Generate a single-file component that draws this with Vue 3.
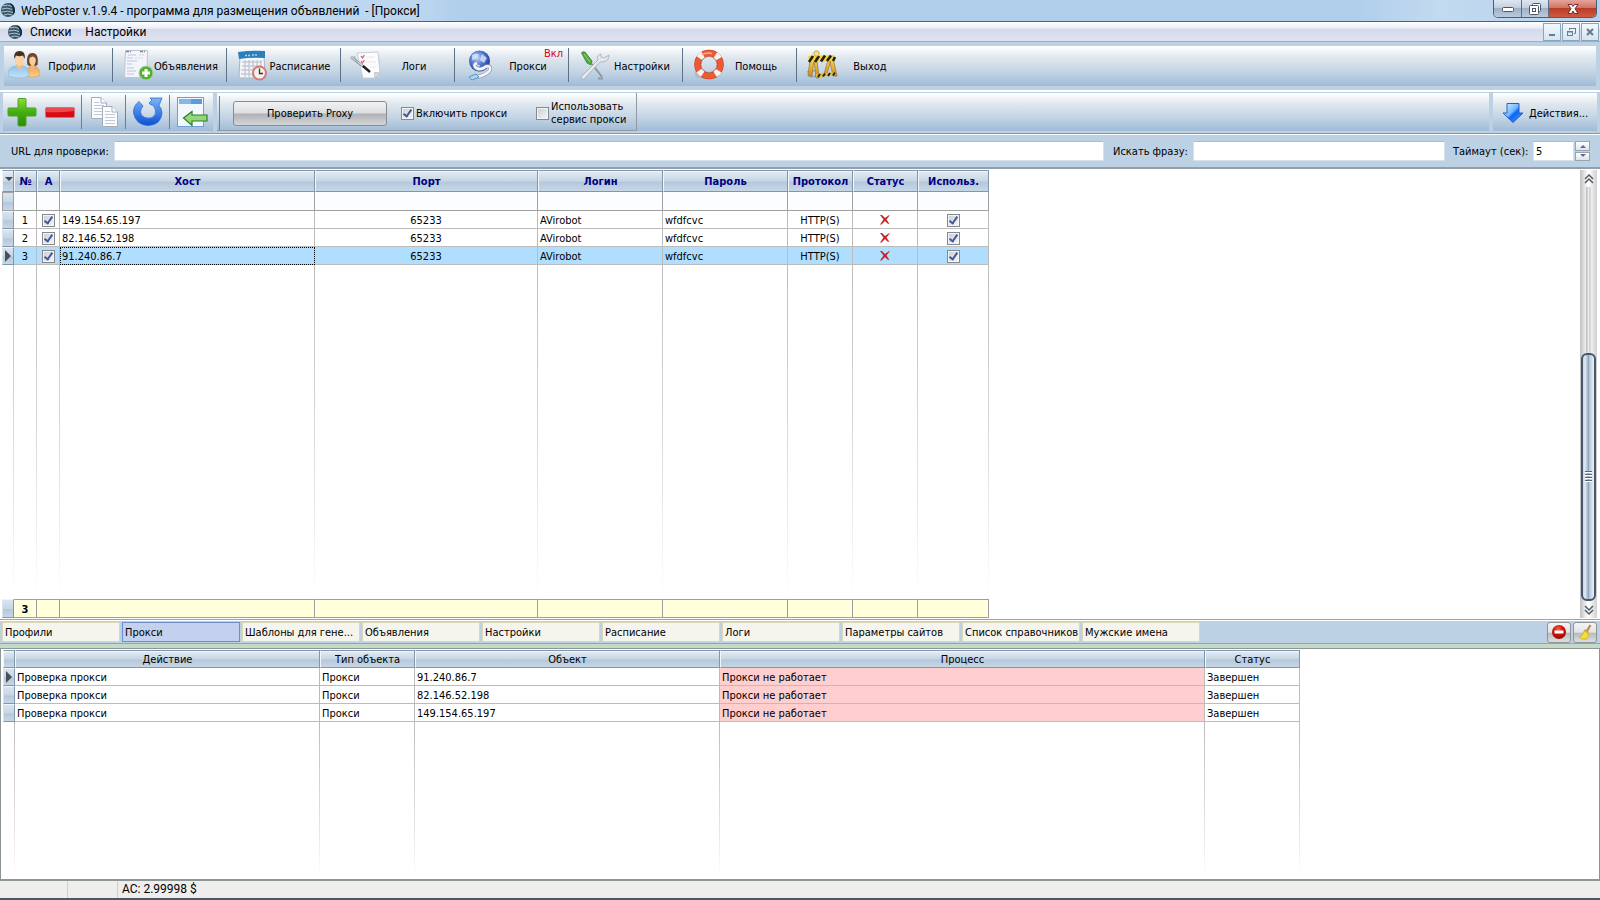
<script setup>
import { ref } from 'vue'

const tools = [
  { id: 'users', label: 'Профили' },
  { id: 'ads', label: 'Объявления' },
  { id: 'calendar', label: 'Расписание' },
  { id: 'logs', label: 'Логи' },
  { id: 'proxy', label: 'Прокси', badge: 'Вкл' },
  { id: 'settings', label: 'Настройки' },
  { id: 'help', label: 'Помощь' },
  { id: 'exit', label: 'Выход' }
]
const proxies = ref([
  { host: '149.154.65.197', port: '65233', login: 'AVirobot', pass: 'wfdfcvc', proto: 'HTTP(S)', a: true, use: true },
  { host: '82.146.52.198', port: '65233', login: 'AVirobot', pass: 'wfdfcvc', proto: 'HTTP(S)', a: true, use: true },
  { host: '91.240.86.7', port: '65233', login: 'AVirobot', pass: 'wfdfcvc', proto: 'HTTP(S)', a: true, use: true }
])
const heads = ['№', 'А', 'Хост', 'Порт', 'Логин', 'Пароль', 'Протокол', 'Статус', 'Использ.']
const tabs = ['Профили', 'Прокси', 'Шаблоны для гене...', 'Объявления', 'Настройки', 'Расписание', 'Логи', 'Параметры сайтов', 'Список справочников', 'Мужские имена']
const jobHeads = ['Действие', 'Тип объекта', 'Объект', 'Процесс', 'Статус']
const jobs = ['91.240.86.7', '82.146.52.198', '149.154.65.197']
const selected = ref(2)
const activeTab = ref(1)
const enabled = ref(true)
const service = ref(false)
const url = ref('')
const phrase = ref('')
const timeout = ref('5')
</script>

<template>
  <div class="window">
    <svg class="defs" width="0" height="0" aria-hidden="true">
      <defs>
        <linearGradient id="gGreen" x1="0" y1="0" x2="0" y2="1"><stop offset="0" stop-color="#8fdc3c" /><stop offset=".5" stop-color="#43ad10" /><stop offset="1" stop-color="#2c8a0b" /></linearGradient>
        <linearGradient id="gBlue" x1="0" y1="0" x2="0" y2="1"><stop offset="0" stop-color="#7db6f5" /><stop offset="1" stop-color="#0b4fd4" /></linearGradient>
        <linearGradient id="gArrow" x1="0" y1="0" x2="1" y2="1"><stop offset="0" stop-color="#e4f3ff" /><stop offset=".45" stop-color="#6db6ff" /><stop offset=".55" stop-color="#0a66f5" /><stop offset="1" stop-color="#48a8ff" /></linearGradient>
        <linearGradient id="gShirt" x1="0" y1="0" x2="0" y2="1"><stop offset="0" stop-color="#8fc4ec" /><stop offset="1" stop-color="#c4e2f6" /></linearGradient>
        <linearGradient id="gOrange" x1="0" y1="0" x2="0" y2="1"><stop offset="0" stop-color="#f0a24c" /><stop offset="1" stop-color="#fbd08a" /></linearGradient>
        <linearGradient id="gFrame" x1="0" y1="0" x2="0" y2="1"><stop offset="0" stop-color="#f8dc58" /><stop offset="1" stop-color="#c9821c" /></linearGradient>
        <radialGradient id="gGlobe" cx=".4" cy=".35" r=".7"><stop offset="0" stop-color="#c2d5f7" /><stop offset=".5" stop-color="#4f77cf" /><stop offset="1" stop-color="#152f8c" /></radialGradient>
        <radialGradient id="gStop" cx=".45" cy=".3" r=".7"><stop offset="0" stop-color="#f26a50" /><stop offset=".5" stop-color="#d51008" /><stop offset="1" stop-color="#8e0a05" /></radialGradient>
      </defs>
      <symbol id="logo" viewBox="0 0 16 16">
        <circle cx="8" cy="8" r="7" fill="#3d5666" />
        <path d="M3 4Q8 2 12 4.500M2 7Q7 5 12 7.500M2 10Q8 8 13 10.500M4 13Q8 11 12 13" fill="none" stroke="#a9c6d6" />
        <path d="M9 1Q15 5 13 13L14.500 11Q16 6 12 2Z" fill="#0e2231" />
      </symbol>
    </svg>

    <header class="titlebar">
      <svg class="logo" width="16" height="16"><use href="#logo" /></svg>
      <h1>WebPoster v.1.9.4 - программа для размещения объявлений&nbsp; - [Прокси]</h1>
      <div class="wbtns">
        <button class="wb wmin" aria-label="Свернуть"><svg width="14" height="8"><rect x="1.500" y="2.500" width="11" height="4" rx="1" fill="#fff" stroke="#4d5666" /></svg></button>
        <button class="wb wmax" aria-label="Восстановить"><svg width="14" height="14" fill="#fff" stroke="#4d5666"><rect x="4.500" y="1.500" width="8" height="8" rx="1" /><rect x="1.500" y="3.500" width="9" height="9" rx="1" /><rect x="4.500" y="6.500" width="3" height="3" /></svg></button>
        <button class="wb wclose" aria-label="Закрыть"><svg width="14" height="12"><path d="M2 1.500H5.500L7 3.500L8.500 1.500H12L9 5.700L12 10.500H8.500L7 8L5.500 10.500H2L5 5.700Z" fill="#fff" stroke="#6b2f33" /></svg></button>
      </div>
    </header>

    <nav class="menubar">
      <svg class="logo" width="16" height="16"><use href="#logo" /></svg>
      <button class="menu">Списки</button>
      <button class="menu">Настройки</button>
      <div class="mdi">
        <button aria-label="Свернуть окно"><svg width="12" height="12"><path d="M3 9H9" stroke="#6a7d8e" stroke-width="2" /></svg></button>
        <button aria-label="Восстановить окно"><svg width="12" height="12" fill="none" stroke="#6a7d8e"><path d="M4.500 4V2.500H10.500V7.500H9M4 2.500H11" /><rect x="2.500" y="5.500" width="5" height="4" /><path d="M2 6H8" /></svg></button>
        <button aria-label="Закрыть окно"><svg width="12" height="12"><path d="M3 3L9 9M9 3L3 9" stroke="#6a7d8e" stroke-width="2.200" /></svg></button>
      </div>
    </nav>

    <div class="bar1">
      <div class="strip1">
        <button v-for="t in tools" :key="t.id" class="tool">
          <svg v-if="t.id === 'users'" width="32" height="32" viewBox="0 0 32 32">
            <path d="M18 27.500Q18 18 24 17Q32 17 32 26Q27 29 18 27.500Z" fill="url(#gOrange)" stroke="#d9913f" stroke-width=".5" />
            <path d="M19.500 16Q17.500 4 24.500 4Q31 4 29.500 16L27 17H22Z" fill="#6b4226" />
            <path d="M23 15H26.500V19L24.500 21L22.500 19Z" fill="#eab888" />
            <ellipse cx="24.500" cy="11.500" rx="3.300" ry="5" fill="#f6cda2" />
            <path d="M20.500 9Q21 5.500 25 5.500L29 10L25 7.500Z" fill="#7a4c2b" />
            <path d="M0 27Q0 17 8 17Q12 19 15 17Q21 18 21 27Q12 31 0 27Z" fill="url(#gShirt)" stroke="#79aeda" stroke-width=".5" />
            <path d="M8 17L11.500 21L15 17V13H8Z" fill="#f1bd87" />
            <ellipse cx="11.500" cy="10.500" rx="4.700" ry="6.500" fill="#f9d3a5" />
            <path d="M6.500 10Q5 2 11.500 2Q18 2 16.500 10L15 6.500Q11 8 8 6.500Z" fill="#43301f" />
          </svg>
          <svg v-else-if="t.id === 'ads'" width="32" height="32" viewBox="0 0 32 32">
            <path d="M3.500 1.500H25.500L25 28.500H2.500Z" fill="#f4f5fa" stroke="#bfc4d2" />
            <path d="M4 2.500H25" stroke="#7d8592" stroke-width="1.500" stroke-dasharray="3 1 1 9" />
            <path d="M6 6H14M5 9H11M5 12H15M5 15H10M5 19H12M5 22H14M5 25H12" stroke="#bcc3e2" />
            <path d="M17 6H22M13 9H22" stroke="#cdd2e4" stroke-dasharray="2 1" />
            <circle cx="24" cy="24" r="7" fill="#4fb32c" stroke="#b9c9b5" /><path d="M24 20V28M20 24H28" stroke="#fff" stroke-width="3" />
          </svg>
          <svg v-else-if="t.id === 'calendar'" width="32" height="32" viewBox="0 0 32 32">
            <path d="M4 6H28L29 29H3Z" fill="#f5f6f8" stroke="#a8b4c4" />
            <path d="M6 13H26M6 17H26M5 21H26M5 25H18M9 11V28M13 11V28M17 11V28M21 11V20M25 11V18" stroke="#c3cad4" stroke-width="1.400" />
            <path d="M2 3Q15 1 29 2V9Q15 8 3 10Z" fill="#2c80b9" />
            <path d="M9 6.500H14M16 6H22" stroke="#a9d3f0" stroke-width="1.500" stroke-dasharray="2 1" />
            <circle cx="23.500" cy="24" r="6.500" fill="#f7efee" stroke="#cf7d74" stroke-width="2" /><path d="M23.500 19.500V24.500H27" fill="none" stroke="#333" stroke-width="1.300" />
          </svg>
          <svg v-else-if="t.id === 'logs'" width="32" height="32" viewBox="0 0 32 32">
            <path d="M8 6L29 5L31 27L13 30Z" fill="#c9ced7" />
            <path d="M7 4L28 3L30 24L25 29L13 29Z" fill="#fcfcfd" stroke="#c8cdd6" />
            <path d="M30 24L24.500 23.500L25 29Z" fill="#d7dbe2" stroke="#bfc4cc" />
            <path d="M11 7L12.500 9L14.500 6M11 12L12.500 14L14.500 11" fill="none" stroke="#c8697a" stroke-width="1.300" />
            <path d="M16 8H25M17 13H26M20 18H27" stroke="#e6e9ee" />
            <path d="M1 8L14 18" stroke="#7e858f" stroke-width="2.400" /><path d="M1 8L13 17" stroke="#d5dae1" stroke-width="1.200" /><path d="M8 15L4 7" stroke="#9aa1aa" /><path d="M13 17L20 23" stroke="#1c1e22" stroke-width="2.400" />
          </svg>
          <svg v-else-if="t.id === 'proxy'" width="32" height="32" viewBox="0 0 32 32">
            <circle cx="15.500" cy="12" r="10.500" fill="url(#gGlobe)" />
            <path d="M8 6Q12 3 15 6L12 10L8 11ZM18 5L23 9L20 14L16 11ZM11 15L16 16L15 19L12 18Z" fill="#e3ebfb" opacity=".75" />
            <path d="M13 14Q8 16 13 19.500Q18 21 22 17.500Q27 16 26 21Q23 26 13 28" fill="none" stroke="#8b98ad" stroke-width="4" />
            <path d="M13 14Q8 16 13 19.500Q18 21 22 17.500Q27 16 26 21Q23 26 13 28" fill="none" stroke="#f2f5f9" stroke-width="2.500" />
            <path d="M5 28L12 25L15 28L8 31Z" fill="#a8d8f3" stroke="#5b93bd" />
          </svg>
          <svg v-else-if="t.id === 'settings'" width="32" height="32" viewBox="0 0 32 32">
            <path d="M14 15L24 28" stroke="#8d959e" stroke-width="2" /><path d="M20 29.500H25" stroke="#9098a2" stroke-width="2" />
            <path d="M3 28L20 11Q18 6 23 5L23 8L26 9L31 6Q31 12 25 13L22 13L6 30Q3 31 3 28Z" fill="#e6e9ec" stroke="#a3aab2" stroke-width=".8" />
            <path d="M3.500 4Q4 2 7 3L14 12L13 16L9 14Z" fill="#4fa63c" stroke="#397d2b" stroke-width=".7" /><path d="M6 5L12 13" stroke="#98d884" />
          </svg>
          <svg v-else-if="t.id === 'help'" width="32" height="32" viewBox="0 0 32 32">
            <path d="M2 22L4 29H27Z" fill="#b3bdc9" />
            <circle cx="17" cy="15.500" r="11.500" fill="none" stroke="#b63b1c" stroke-width="6.500" />
            <circle cx="17" cy="15.500" r="11.500" fill="none" stroke="#ee5a34" stroke-width="5.500" />
            <circle cx="17" cy="15.500" r="11.500" fill="none" stroke="#f7f3f0" stroke-width="6.500" stroke-dasharray="5 13.060" stroke-dashoffset="-6.500" />
            <path d="M10 6Q14 3 20 4.500" fill="none" stroke="#ffa88a" stroke-width="1.500" />
            <circle cx="17" cy="15.500" r="8" fill="none" stroke="#a3625a" stroke-width=".6" />
          </svg>
          <svg v-else width="32" height="32" viewBox="0 0 32 32">
            <path d="M1 23L12 21M4 28L17 26" stroke="#98a4b0" stroke-width="1.500" />
            <path d="M4 10H8L6 27H2ZM23 9H27L31 27H27ZM8 11H11L13 29H10ZM22 11H25L21 25H18Z" fill="url(#gFrame)" stroke="#956315" stroke-width=".6" />
            <path d="M2 7L28 6L29 12L3 13Z" fill="#f5d53c" /><path d="M3 13L7 7M9 13L13 7M15 12.500L19 6.500M21 12L25 6.500M27 12L29 8" stroke="#202014" stroke-width="2.600" />
            <path d="M10 25L30 23V26L10 28.500Z" fill="#e5bd2c" /><path d="M12 28L14 25M17 27.500L19 24.500M22 27L24 24M27 26.500L29 23.500" stroke="#262414" stroke-width="2" />
            <circle cx="10.500" cy="4.500" r="2.700" fill="#f8dc8d" stroke="#d6a349" />
          </svg>
          <span class="tlabel">{{ t.label }}</span>
          <span v-if="t.badge" class="badge">{{ t.badge }}</span>
        </button>
      </div>
    </div>

    <div class="bar2">
      <div class="strip quick">
        <button class="ib" aria-label="Добавить"><svg width="32" height="32" viewBox="0 0 32 32"><path d="M12 3.500Q12 2.500 13 2.500H19Q20 2.500 20 3.500V12H29Q30 12 30 13V19Q30 20 29 20H20V29Q20 30 19 30H13Q12 30 12 29V20H3Q2 20 2 19V13Q2 12 3 12H12Z" fill="url(#gGreen)" stroke="#4aa321" /></svg></button>
        <button class="ib" aria-label="Удалить"><svg width="32" height="32" viewBox="0 0 32 32"><rect x="1.500" y="11.500" width="29" height="10" rx="1.500" fill="#d80a14" stroke="#c9737a" /><path d="M2 12H30V15Q16 17 2 16Z" fill="#ea4a4c" /></svg></button>
        <i class="sep"></i>
        <button class="ib" aria-label="Копировать"><svg width="32" height="32" viewBox="0 0 32 32" fill="#fbfcfe" stroke="#a4adba"><path d="M3.500 1.500H13L18.500 7V22.500H3.500Z" /><path d="M13 1.500V7H18.500" /><path d="M6 6.500H11M6 9.500H16M6 12.500H16M6 15.500H16M6 18.500H16" stroke="#c1c9d6" /><path d="M14.500 10.500H24L29.500 16V30.500H14.500Z" /><path d="M24 10.500V16H29.500" /><path d="M17 15.500H22M17 18.500H27M17 21.500H27M17 24.500H27M17 27.500H27" stroke="#c1c9d6" /></svg></button>
        <i class="sep"></i>
        <button class="ib" aria-label="Обновить"><svg width="32" height="32" viewBox="0 0 32 32"><path d="M7 5.500Q1 10 1.500 17Q4 29 16 29.500Q29 29 30 17Q30 13 27 9.500L30 2H18L20 4L17 7L19 9H21Q25 14 23 19Q20 23 15 22Q9 21 8.500 16Q8.500 13 11 10Z" fill="url(#gBlue)" stroke="#2a72dd" stroke-width=".8" /></svg></button>
        <i class="sep"></i>
        <button class="ib" aria-label="Импорт"><svg width="32" height="32" viewBox="0 0 32 32"><rect x="1.500" y="1.500" width="26" height="29" fill="#f2f8fe" stroke="#6f9fd0" /><path d="M3 3H26V8H3Z" fill="#5d9cdb" /><path d="M3 3H15V8H3Z" fill="#86b8e6" /><path d="M7.500 22L16 15.500V19H31V25H16V29.500Z" fill="#93d77a" stroke="#2d7f21" stroke-width="1.200" /></svg></button>
      </div>
      <div class="strip mid">
        <div class="panel">
          <i class="sep"></i>
          <button class="check">Проверить Proxy</button>
          <label class="cl first"><input v-model="enabled" type="checkbox" /><span>Включить прокси</span></label>
          <label class="cl"><input v-model="service" type="checkbox" /><span>Использовать<br />сервис прокси</span></label>
        </div>
      </div>
      <button class="strip actions">
        <svg width="22" height="22" viewBox="0 0 22 22"><path d="M5 1.500H17V11H21L11 20.500L1 11H5Z" fill="url(#gArrow)" stroke="#2a5cc4" /></svg>
        <span>Действия...</span>
      </button>
    </div>

    <form class="urlbar" @submit.prevent>
      <label for="url">URL для проверки:</label>
      <input id="url" v-model="url" class="iurl" type="text" />
      <label for="phrase">Искать фразу:</label>
      <input id="phrase" v-model="phrase" class="iphrase" type="text" />
      <label for="timeout">Таймаут (сек):</label>
      <input id="timeout" v-model="timeout" class="itime" type="text" />
      <div class="spin">
        <button type="button" aria-label="Больше" @click="timeout = String(+timeout + 1)"><svg width="8" height="4"><path d="M1 4L4 1L7 4Z" fill="#5a6c9c" /></svg></button>
        <button type="button" aria-label="Меньше" @click="timeout = String(+timeout - 1)"><svg width="8" height="4"><path d="M1 0L4 3L7 0Z" fill="#5a6c9c" /></svg></button>
      </div>
    </form>

    <main class="grid">
      <div class="gridbody">
        <table class="t1">
          <colgroup><col class="ind" /><col class="c23" /><col class="c23" /><col class="chost" /><col class="cport" /><col class="c125" /><col class="c125" /><col class="c65" /><col class="c65" /><col class="c71" /></colgroup>
          <thead>
            <tr><th class="gh mark"><svg width="8" height="5"><path d="M0 0H8L4 4Z" fill="#40474e" /></svg></th><th v-for="h in heads" :key="h" class="gh">{{ h }}</th></tr>
          </thead>
          <tbody>
            <tr class="filter"><td class="gi"></td><td v-for="n in 9" :key="n"></td></tr>
            <tr v-for="(p, i) in proxies" :key="p.host" :class="{ sel: i === selected }" @click="selected = i">
              <td class="gi"><svg v-if="i === selected" width="8" height="12"><path d="M1 0L7 6L1 12Z" fill="#4a5056" /></svg></td>
              <td class="mid-c">{{ i + 1 }}</td>
              <td class="mid-c"><input v-model="p.a" type="checkbox" :aria-label="'А ' + p.host" /></td>
              <td :class="{ focus: i === selected }">{{ p.host }}</td>
              <td class="mid-c">{{ p.port }}</td>
              <td>{{ p.login }}</td>
              <td>{{ p.pass }}</td>
              <td class="mid-c">{{ p.proto }}</td>
              <td class="mid-c"><svg width="12" height="12" viewBox="0 0 12 12"><path d="M1 1L3 1L6 4L9.500 1.500L11 1L7.500 5.500L10.500 10L8.500 9.500L6 7L2.500 10.500L1 10.500L4.500 5.500Z" fill="#c4262a" /></svg></td>
              <td class="mid-c"><input v-model="p.use" type="checkbox" :aria-label="'Использ. ' + p.host" /></td>
            </tr>
            <tr class="fill"><td></td><td v-for="n in 9" :key="n"></td></tr>
          </tbody>
          <tfoot>
            <tr><td class="gi"></td><td class="mid-c">3</td><td v-for="n in 8" :key="n"></td></tr>
          </tfoot>
        </table>
      </div>
      <div class="scroll">
        <button aria-label="Вверх"><svg width="12" height="12"><path d="M2 6L6 2L10 6M2 10L6 6L10 10" fill="none" stroke="#555a60" stroke-width="1.500" /></svg></button>
        <div class="track"><div class="thumb"><i></i><i></i><i></i><i></i></div></div>
        <button aria-label="Вниз"><svg width="12" height="12"><path d="M2 2L6 6L10 2M2 6L6 10L10 6" fill="none" stroke="#555a60" stroke-width="1.500" /></svg></button>
      </div>
    </main>

    <div class="tabs">
      <button v-for="(t, i) in tabs" :key="t" class="tab" :class="{ on: i === activeTab }" @click="activeTab = i">{{ t }}</button>
      <div class="tabtools">
        <button aria-label="Остановить"><svg width="16" height="16"><circle cx="8" cy="8" r="7" fill="url(#gStop)" /><rect x="3.500" y="6.500" width="9" height="3" fill="#fff" /></svg></button>
        <button aria-label="Очистить"><svg width="16" height="16"><path d="M10 7L13.500 1" stroke="#c28a3a" stroke-width="2.200" /><path d="M8 5L12 8L11 9L7 7Z" fill="#c9a24a" /><path d="M7 7L11 9Q12 13 10 15Q5 16 2 13Q6 12 7 7Z" fill="#f1de3c" stroke="#c5a91d" stroke-width=".7" /></svg></button>
      </div>
    </div>

    <section class="jobs">
      <table class="t2">
        <colgroup><col class="ind" /><col class="j305" /><col class="j95" /><col class="j305" /><col class="j485" /><col class="j95" /></colgroup>
        <thead><tr><th class="gh"></th><th v-for="h in jobHeads" :key="h" class="gh">{{ h }}</th></tr></thead>
        <tbody>
          <tr v-for="(j, i) in jobs" :key="j">
            <td class="gi"><svg v-if="i === 0" width="8" height="12"><path d="M1 0L7 6L1 12Z" fill="#4a5056" /></svg></td>
            <td>Проверка прокси</td><td>Прокси</td><td>{{ j }}</td><td class="bad">Прокси не работает</td><td>Завершен</td>
          </tr>
          <tr class="fill"><td v-for="n in 6" :key="n"></td></tr>
        </tbody>
      </table>
    </section>

    <footer class="status"><span class="s1"></span><span class="s2"></span><span>AC: 2.99998 $</span></footer>
  </div>
</template>

<style>
body { margin: 0; }
</style>

<style scoped>
.window { display: flex; flex-direction: column; height: 100vh; overflow: hidden; background: #bdd1e4; color: #000; font: 11px/13px "DejaVu Sans Condensed", "DejaVu Sans", sans-serif; }
.window * { box-sizing: border-box; }
.defs { position: absolute; }
button, input { margin: 0; padding: 0; font: inherit; color: inherit; border-radius: 0; }
button { border: 0; background: none; }
svg { display: block; flex: none; }

.titlebar { display: flex; align-items: flex-start; flex: none; height: 22px; padding-right: 3px; border-bottom: 1px solid #4f6172; background: linear-gradient(90deg, #c4dcf2 0, #bcd6ef 420px, #b1cfeb 460px, #b1cfeb 85%, #c3daf0 90%, #b4d1ed 100%); }
.titlebar .logo { margin: 2px 5px 0 0; }
h1 { flex: 1; margin: 2px 0 0; font: 12px/18px Roboto, sans-serif; white-space: nowrap; }
.wbtns { display: flex; height: 18px; border: 1px solid #4e5e70; border-top: 0; border-radius: 0 0 5px 5px; overflow: hidden; }
.wb { display: flex; align-items: center; justify-content: center; width: 28px; border-right: 1px solid #5d6f83; background: linear-gradient(#dde7f1 0, #c3d0de 45%, #9fb1c5 50%, #bccbdc 100%); }
.wmax { width: 27px; }
.wclose { width: 47px; border: 0; background: linear-gradient(#e5a49a 0, #d07565 45%, #b93c26 50%, #cf5a40 100%); }

.menubar { display: flex; align-items: center; flex: none; height: 20px; padding: 0 1px 0 7px; border-bottom: 1px solid #a4aeba; background: linear-gradient(#fff 0, #eceff7 30%, #d5dbec 40%, #dfe3f3 100%); font: 12px/16px Roboto, sans-serif; }
.menubar .logo { margin-right: 7px; }
.menu { margin-right: 14px; }
.mdi { display: flex; gap: 1px; margin-left: auto; }
.mdi button { display: flex; align-items: center; justify-content: center; width: 18px; height: 18px; border: 1px solid #8ba5bb; background: linear-gradient(#f2f8fd, #d5e5f3); }

.bar1 { flex: none; padding: 4px 4px; border-bottom: 2px solid #fff; }
.strip1 { display: flex; gap: 5px; height: 40px; background: linear-gradient(#fff 0, #dfe7ee 30%, #c3d4e4 65%, #9fbbd7 100%); }
.tool { position: relative; display: flex; align-items: center; flex: none; width: 109px; padding-left: 4px; height: 34px; margin-top: 2px; border-right: 1px solid #5c7287; }
.tool:last-child { border-right: 0; }
.tlabel { width: 64px; text-align: center; white-space: nowrap; display: flex; justify-content: center; margin-top: 3px; }
.badge { position: absolute; right: 5px; top: -1px; color: #dc0018; line-height: 13px; }

.bar2 { display: flex; flex: none; gap: 4px; height: 43px; padding: 1px 3px 3px; border-bottom: 1px solid #fff; box-shadow: inset 0 -1px 0 #8d9499; }
.strip { background: linear-gradient(#fff 0, #dfe7ee 30%, #c3d4e4 65%, #9fbbd7 100%); }
.quick { display: flex; align-items: center; gap: 5px; width: 210px; padding-left: 2px; }
.ib { width: 33px; }
.ib svg { margin: auto; }
.sep { width: 1px; height: 34px; background: #6b7f92; flex: none; }
.mid { flex: 1; display: flex; }
.panel { display: flex; align-items: center; width: 420px; padding: 3px 0 0 2px; border-right: 1px solid #8f9aa5; border-bottom: 1px solid #8f9aa5; }
.check { width: 154px; height: 25px; margin-left: 13px; border: 1px solid #898d93; border-radius: 3px; background: linear-gradient(#f1f2f3 0, #dcdee0 48%, #b0b2b5 52%, #d3d5d7 100%); }
.cl { display: flex; align-items: center; gap: 2px; white-space: nowrap; margin-left: 29px; }
.cl.first { margin-left: 14px; }
input[type="checkbox"] { appearance: none; flex: none; display: grid; place-items: center; width: 13px; height: 13px; border: 1px solid #85898f; background: linear-gradient(135deg, #c9ccd2, #f8f8f9); box-shadow: inset 0 0 0 1px #f4f4f4; }
input[type="checkbox"]:checked::after { content: ""; width: 3px; height: 7px; margin: -2px 0 0; border: solid #44589c; border-width: 0 2px 2px 0; transform: rotate(35deg); }
.actions { display: flex; align-items: center; width: 104px; padding: 2px 0 0 9px; gap: 5px; white-space: nowrap; }

.urlbar { display: flex; align-items: center; flex: none; height: 34px; padding: 0 10px 0 11px; border-bottom: 2px solid #989ea5; }
.urlbar label { white-space: nowrap; flex: none; }
.urlbar input { height: 20px; border: 1px solid #d6e1eb; border-top-color: #a9bccd; background: #fff; padding: 0 2px; }
.urlbar label[for="url"] { width: 103px; }
.urlbar .iurl { flex: 1; min-width: 0; margin-right: 9px; }
.urlbar label[for="phrase"] { width: 80px; }
.urlbar .iphrase { width: 252px; margin-right: 8px; }
.urlbar label[for="timeout"] { width: 80px; }
.urlbar .itime { width: 41px; }
.spin { display: flex; flex-direction: column; gap: 1px; width: 15px; height: 20px; margin-left: 1px; }
.spin button { flex: 1; display: flex; align-items: center; justify-content: center; border: 1px solid #9aa5b2; background: linear-gradient(#fff, #dfe4ea); }

.grid { display: flex; flex: 452 1 0; min-height: 0; padding: 1px 3px 1px 2px; background: #fff; border-bottom: 1px solid #99a5ae; }
.gridbody { flex: 1; display: flex; }
table { border-collapse: separate; border-spacing: 0; table-layout: fixed; }
.t1 { width: 987px; height: 100%; }
.ind { width: 12px; }
.c23 { width: 23px; }
.chost { width: 255px; }
.cport { width: 223px; }
.c125 { width: 125px; }
.c65 { width: 65px; }
.c71 { width: 71px; }
.j305 { width: 305px; }
.j95 { width: 95px; }
.j485 { width: 485px; }
td, th { padding: 0 1px; overflow: hidden; white-space: nowrap; }
td { height: 18px; padding: 1px 1px 0 2px; border-right: 1px solid #bcbcbc; border-bottom: 1px solid #bcbcbc; }
.gh { border: 1px solid #8097ad; border-left-color: #f0f6fb; background: linear-gradient(#e3ecf4 0, #c6d6e5 50%, #b5c8da 56%, #c6d7e7 100%); box-shadow: inset 0 1px 0 #f0f5fa; text-align: center; }
.t1 .gh { height: 22px; color: #000080; font-weight: bold; }
.mark svg { margin: -4px 0 0 1px; }
.gi { padding: 0; border: 1px solid #8097ad; border-left-color: #d8e4ee; border-top-color: #eff5fa; background: linear-gradient(#d9e5f0 0, #c6d6e5 50%, #b5c8da 55%, #c6d7e7 100%); }
.gi svg { margin: 0 auto; }
.filter td { height: 19px; border-color: #a0a0a0; }
.filter td:not(.gi) { background: #fbfdfe; }
.mid-c { padding-left: 1px; text-align: center; }
.mid-c svg, .mid-c input { margin: 0 auto; }
.sel td:not(.gi) { background: #b0deff; }
td.focus { outline: 1px dotted #000; outline-offset: -1px; }
.fill td { height: auto; border-bottom: 0; border-right: 1px solid; border-image: linear-gradient(#bcbcbc, #e0e0e0 60%, #fff) 1; }
tfoot td { height: 19px; border-top: 1px solid #a0a0a0; border-color: #a0a0a0; }
tfoot td:not(.gi) { background: #ffffdc; font-weight: bold; }

.scroll { display: flex; flex-direction: column; width: 17px; background: linear-gradient(90deg, #bfbfc1 0, #f0f0f0 35%, #fff 50%, #d0d0d2 100%); }
.scroll button { display: flex; align-items: center; justify-content: center; height: 17px; width: 17px; flex: none; }
.track { flex: 1; display: flex; flex-direction: column; justify-content: flex-end; padding: 0 1px; background: linear-gradient(90deg, transparent 6px, #b7b7ba 6px, #f4f4f4 9px, #b7b7ba 10px, transparent 11px); }
.thumb { height: 60%; display: flex; flex-direction: column; align-items: center; justify-content: center; gap: 1px; border: 2px solid #46576a; border-radius: 6px; background: linear-gradient(90deg, #c9d9e8 0, #dfe9f3 20%, #8fa8c0 50%, #b8c9da 60%, #eef3f8 100%); }
.thumb i { width: 7px; height: 2px; background: #5c646c; border-bottom: 1px solid #fff; }

.tabs { display: flex; align-items: center; flex: none; gap: 2px; height: 24px; padding: 0 3px 0 2px; border-top: 1px solid #fff; border-bottom: 1px solid #96a5ad; }
.tab { flex: none; width: 118px; height: 20px; padding: 1px 0 0 2px; border: 1px solid #d9d7b4; background: #f5f4ed; text-align: left; white-space: nowrap; }
.tab.on { border-color: #6a8ed0; background: #c4d1ee; }
.tabtools { display: flex; gap: 2px; margin-left: auto; }
.tabtools button { display: flex; align-items: center; justify-content: center; width: 24px; height: 21px; border: 1px solid #8f9499; border-radius: 3px; background: linear-gradient(#f5f5f6 0, #e2e3e4 48%, #b9bbbd 55%, #dddedf 100%); }

.jobs { flex: 231 1 0; min-height: 0; display: flex; margin-top: 4px; padding: 1px 0 0 2px; border: 1px solid #8d9694; border-bottom-width: 2px; background: #fff; box-shadow: 0 -4px 0 #c3dac8; }
.t2 { width: 1297px; height: 100%; }
.t2 .gh { height: 18px; font-weight: normal; }
.bad { background: #ffcece; }

.status { display: flex; flex: none; height: 19px; padding-left: 2px; background: #f0eeed; border-bottom: 2px solid #4d5766; font: 12px/17px Roboto, sans-serif; }
.status span { padding-left: 4px; }
.status .s1 { width: 66px; border-right: 1px solid #cfcfcf; }
.status .s2 { width: 50px; border-right: 1px solid #cfcfcf; }
</style>
